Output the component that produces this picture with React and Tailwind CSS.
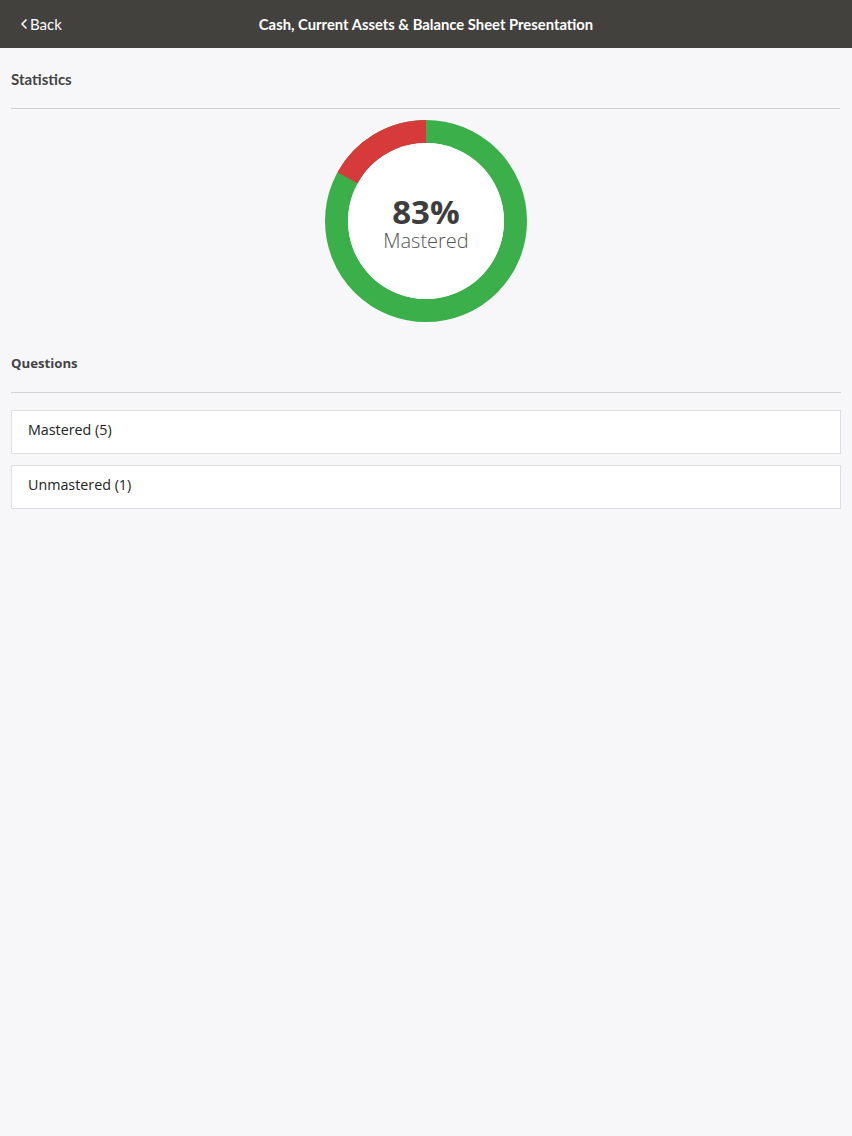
import { ChevronLeft } from "lucide-react";

const Donut = ({ percent }) => {
    // red arc runs counterclockwise from 12 o'clock
    const r = 89.5;
    const c = 101;
    const a = ((-90 - (100 - percent) * 3.6) * Math.PI) / 180;
    const x = c + r * Math.cos(a);
    const y = c + r * Math.sin(a);

    return (
        <div className="relative w-[202px] h-[202px]">
            <svg width="202" height="202" viewBox="0 0 202 202">
                <circle cx={c} cy={c} r={r} fill="none" stroke="#3bb04a" strokeWidth="23" />
                <path d={`M ${c} ${c - r} A ${r} ${r} 0 0 0 ${x} ${y}`} fill="none" stroke="#d63a3a" strokeWidth="23" />
                <circle cx={c} cy={c} r="78" fill="#ffffff" />
            </svg>
            <div className="absolute inset-0 flex flex-col items-center justify-center pt-[6px]">
                <p className="font-['Open_Sans',sans-serif] font-bold text-[33px] leading-[34px] text-[#3d3d3d]">{percent}%</p>
                <p className="font-['Open_Sans',sans-serif] font-light text-[20px] leading-[24px] text-[#555]">Mastered</p>
            </div>
        </div>
    );
};

const App = () => {
    const rows = ["Mastered (5)", "Unmastered (1)"];

    return (
        <div className="min-h-[1136px] bg-[#f7f7f9]">
            <div className="h-12 bg-[#43413d] flex items-center relative">
                <div className="absolute left-[16px] flex items-center text-white font-['Lato',sans-serif] text-[15px]">
                    <ChevronLeft size={16} strokeWidth={2.5} className="-mr-[2px]" />
                    <span>Back</span>
                </div>
                <h1 className="w-full text-center text-white font-['Lato',sans-serif] font-bold text-[14.8px]">
                    Cash, Current Assets &amp; Balance Sheet Presentation
                </h1>
            </div>

            <div className="px-[11px]">
                <h2 className="pt-[21px] font-['Lato',sans-serif] font-bold text-[15px] leading-[20px] text-[#444]">Statistics</h2>
                <div className="mt-[19px] mr-[1px] border-t border-[#cfcfcf]"></div>

                <div className="mt-[11px] flex justify-center">
                    <Donut percent={83} />
                </div>

                <h2 className="mt-[31px] font-['Open_Sans',sans-serif] font-bold text-[13.2px] leading-[20px] text-[#444]">Questions</h2>
                <div className="mt-[19px] border-t border-[#d3d3d3]"></div>

                <div className="mt-[17px] flex flex-col gap-[11px]">
                    {
                        rows.map(row =>
                            <div key={row} className="h-[44px] bg-white border border-[#dedede] flex items-center pl-[16px] pb-[4px]">
                                <span className="font-['Open_Sans',sans-serif] text-[14.3px] text-[#222]">{row}</span>
                            </div>
                        )
                    }
                </div>
            </div>
        </div>
    );
};

export default App;
